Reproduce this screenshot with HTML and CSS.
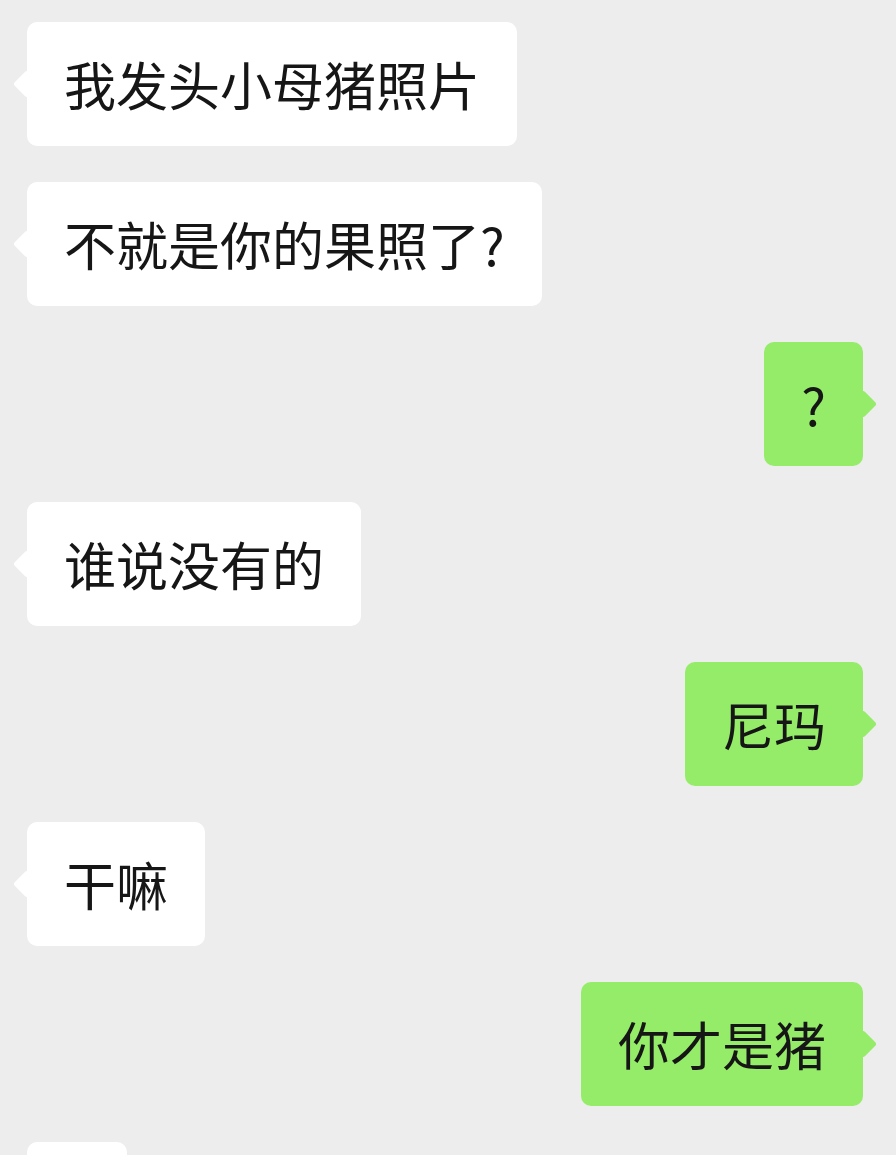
FILE: index.html
```html
<!DOCTYPE html>
<html>
<head>
    <title>聊天</title>
    <link rel="stylesheet" href="styles.css">
</head>
<body>
  <div class="chat">
    <div class="msg left"><div class="bubble">我发头小母猪照片</div></div>
    <div class="msg left"><div class="bubble">不就是你的果照了?</div></div>
    <div class="msg right"><div class="bubble">?</div></div>
    <div class="msg left"><div class="bubble">谁说没有的</div></div>
    <div class="msg right"><div class="bubble">尼玛</div></div>
    <div class="msg left"><div class="bubble">干嘛</div></div>
    <div class="msg right"><div class="bubble">你才是猪</div></div>
    <!-- next message, only its top edge is on screen -->
    <div class="msg left"><div class="bubble empty"></div></div>
  </div>
</body>
</html>
```

FILE: styles.css
```css
* {
    margin: 0;
    padding: 0;
    box-sizing: border-box;
}

html, body {
    background-color: #ededed;
}

body {
    font-family: "Noto Sans CJK SC", "Noto Sans", sans-serif;
    color: #161616;
    overflow: hidden;
}

.chat {
    display: flex;
    flex-direction: column;
    gap: 36px;
    padding: 22px 33px 0 27px;
}

.msg {
    display: flex;
}

.msg.right {
    justify-content: flex-end;
}

.bubble {
    position: relative;
    font-size: 52px;
    line-height: 60px;
    padding: 32px 37px;
    border-radius: 10px;
    background-color: #fff;
    white-space: nowrap;
}

.bubble.empty {
    width: 100px;
    height: 124px;
}

.right .bubble {
    background-color: #95ec69;
}

/* little tail on the side of the bubble */
.bubble::before {
    content: "";
    position: absolute;
    top: 50%;
    width: 20px;
    height: 20px;
    margin-top: -10px;
    border-radius: 3px;
    background-color: inherit;
    transform: rotate(45deg);
}

.left .bubble::before {
    left: -10px;
}

.right .bubble::before {
    right: -10px;
}
```
